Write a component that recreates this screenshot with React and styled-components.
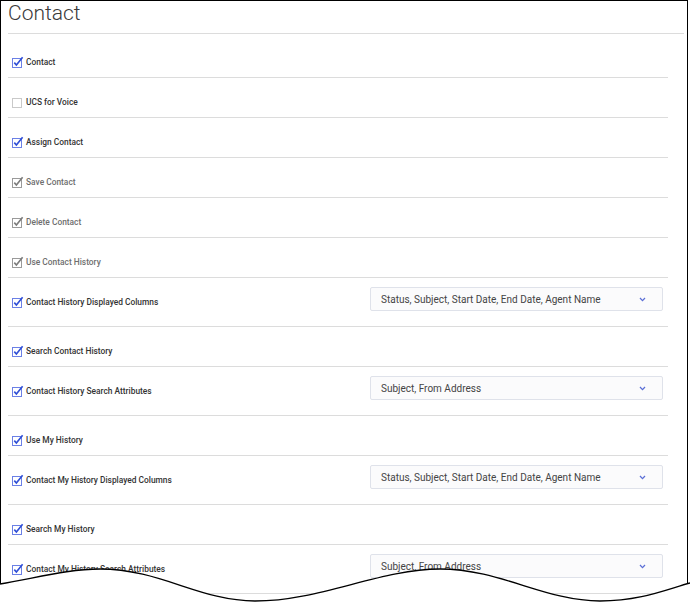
import React from 'react';
import styled, { createGlobalStyle } from 'styled-components';

const GlobalStyle = createGlobalStyle`
  body {
    margin: 0;
    background: #fff;
    font-family: Roboto, "Liberation Sans", sans-serif;
  }
`;

const Page = styled.div`
  position: relative;
  width: 690px;
  height: 603px;
  overflow: hidden;
  background: #fff;
`;

const Frame = styled.div`
  width: 688px;
  height: 603px;
  box-sizing: border-box;
  border: 1px solid #000;
  border-bottom: none;
  padding: 0 3px 0 7px;
  overflow: hidden;
`;

const Title = styled.h1`
  margin: 0;
  padding-bottom: 7px;
  font-size: 21px;
  line-height: 25px;
  font-weight: 300;
  color: #3a3a3a;
  border-bottom: 1px solid #dcdcdc;
`;

const List = styled.div`
  margin: 4px 16px 0 0;
`;

const Row = styled.div`
  display: flex;
  align-items: flex-start;
  border-bottom: 1px solid #dcdcdc;
`;

const Label = styled.label`
  flex: 1;
  display: flex;
  align-items: center;
  gap: 2px;
  height: 12px;
  margin: 18px 0 9px;
  padding-left: 4px;
  font-size: 8.4px;
  font-weight: 500;
  color: ${p => (p.disabled ? '#6e6e6e' : '#333')};
  white-space: nowrap;
`;

const Box = styled.svg`
  flex: none;
  width: 12px;
  height: 12px;
  margin-top: -1px;
`;

const Select = styled.div`
  display: flex;
  align-items: center;
  justify-content: space-between;
  box-sizing: border-box;
  width: 293px;
  height: 24px;
  margin: 9px 5px 15px 0;
  padding: 0 16px 0 10px;
  border: 1px solid #dfe2ea;
  border-radius: 2px;
  background: #fbfbfc;
  font-size: 10px;
  color: #444;
`;

const Chevron = styled.svg`
  width: 7px;
  height: 5px;
`;

const Tear = styled.svg`
  position: absolute;
  left: 0;
  top: 560px;
  width: 690px;
  height: 43px;
`;

const Check = ({ state }) => {
  const border = state === 'off' ? '#c9c9c9' : state === 'dis' ? '#9a9a9a' : '#6b80e6';
  const tick = state === 'dis' ? '#7c7c7c' : '#2f4fd6';
  return (
    <Box viewBox="0 0 12 12">
      <rect x="0.5" y="2.5" width="9" height="9" fill="#fff" stroke={border} />
      {state !== 'off' && (
        <path d="M2.3 6.6 L4.4 9 L10.6 1.2" fill="none" stroke={tick} strokeWidth="1.6" />
      )}
    </Box>
  );
};

const rows = [
  { label: 'Contact', state: 'on' },
  { label: 'UCS for Voice', state: 'off' },
  { label: 'Assign Contact', state: 'on' },
  { label: 'Save Contact', state: 'dis' },
  { label: 'Delete Contact', state: 'dis' },
  { label: 'Use Contact History', state: 'dis' },
  { label: 'Contact History Displayed Columns', state: 'on', value: 'Status, Subject, Start Date, End Date, Agent Name' },
  { label: 'Search Contact History', state: 'on' },
  { label: 'Contact History Search Attributes', state: 'on', value: 'Subject, From Address' },
  { label: 'Use My History', state: 'on' },
  { label: 'Contact My History Displayed Columns', state: 'on', value: 'Status, Subject, Start Date, End Date, Agent Name' },
  { label: 'Search My History', state: 'on' },
  { label: 'Contact My History Search Attributes', state: 'on', value: 'Subject, From Address' },
];

const wave =
  'M0 584 C40 577 70 569 100 569 C160 569 200 601 255 601 C320 601 380 569 440 569 C500 569 545 601 600 601 C640 601 665 590 690 583';

export default function App() {
  return (
    <Page>
      <GlobalStyle />
      <Frame>
        <Title>Contact</Title>
        <List>
          {rows.map(r => (
            <Row key={r.label}>
              <Label disabled={r.state === 'dis'}>
                <Check state={r.state} />
                {r.label}
              </Label>
              {r.value && (
                <Select>
                  {r.value}
                  <Chevron viewBox="0 0 7 5">
                    <path d="M1 1 L3.5 3.6 L6 1" fill="none" stroke="#5b6fd6" strokeWidth="1.3" />
                  </Chevron>
                </Select>
              )}
            </Row>
          ))}
        </List>
      </Frame>
      <Tear viewBox="0 560 690 43">
        <path d={`${wave} L690 603 L0 603 Z`} fill="#fff" />
        <path d={wave} fill="none" stroke="#000" strokeWidth="1.3" />
      </Tear>
    </Page>
  );
}
